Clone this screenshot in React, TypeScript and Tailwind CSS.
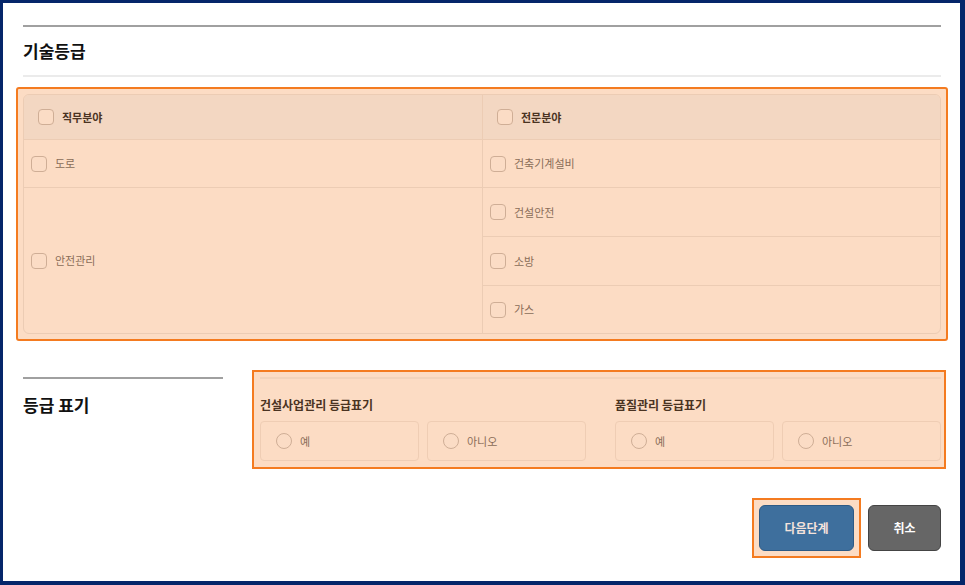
import React from "react";

const font = { fontFamily: '"Noto Sans CJK KR", "Noto Sans", sans-serif' };

function Check() {
  return <span className="inline-block w-4 h-4 shrink-0 rounded-[4px] border border-[#cfae96] bg-[#fbdcc5]" />;
}
function Radio() {
  return <span className="inline-block w-4 h-4 shrink-0 rounded-full border border-[#cfae96] bg-[#fbdcc5]" />;
}

function Cell({ label, className = "" }: { label: string; className?: string }) {
  return (
    <div className={"flex items-center gap-2 pl-[7px] text-[11px] text-[#8a6d58] " + className}>
      <Check />
      <span>{label}</span>
    </div>
  );
}

function RadioBox({ label }: { label: string }) {
  return (
    <div className="flex-1 h-10 flex items-center gap-2 pl-[15px] rounded-[4px] border border-[#efcdb4] text-[11px] text-[#8a6d58]">
      <Radio />
      <span>{label}</span>
    </div>
  );
}

export default function App() {
  return (
    <div
      style={font}
      className="h-[585px] w-[965px] bg-white border-l-[3px] border-t-[3px] border-r-[5px] border-b-[4px] border-[#05266a] overflow-hidden"
    >
      <div className="pl-[20px] pr-[19px] pt-[22px]">
        <div className="h-[2px] bg-[#a0a0a0]" />
        <div className="h-[48px] flex items-center text-[17px] font-bold text-[#111]">기술등급</div>
        <div className="h-[2px] bg-[#ebebeb]" />
        <div className="mt-[10px] -mx-[7px] border-2 border-[#f47b20] rounded-[3px] bg-[#fcdcc4] p-[5px]">
          <div className="rounded-[6px] border border-[#ecccb4] overflow-hidden">
            <div className="grid grid-cols-[459px_1fr] h-[45px] bg-[#f3d7c2] border-b border-[#ecccb4]">
              <div className="flex items-center gap-2 pl-[14px] text-[11px] font-bold text-[#4a3322] border-r border-[#ecccb4]">
                <Check />
                <span>직무분야</span>
              </div>
              <div className="flex items-center gap-2 pl-[14px] text-[11px] font-bold text-[#4a3322]">
                <Check />
                <span>전문분야</span>
              </div>
            </div>
            <div className="grid grid-cols-[459px_1fr]">
              <Cell label="도로" className="h-[48px] border-r border-b border-[#ecccb4]" />
              <Cell label="건축기계설비" className="h-[48px] border-b border-[#ecccb4]" />
              <Cell label="안전관리" className="row-span-3 border-r border-[#ecccb4]" />
              <Cell label="건설안전" className="h-[49px] border-b border-[#ecccb4]" />
              <Cell label="소방" className="h-[49px] border-b border-[#ecccb4]" />
              <Cell label="가스" className="h-[47px]" />
            </div>
          </div>
        </div>

        <div className="mt-[29px] flex items-start">
          <div className="w-[200px] pt-[7px]">
            <div className="h-[2px] bg-[#a0a0a0]" />
            <div className="h-[52px] flex items-center text-[17px] font-bold text-[#111]">등급 표기</div>
          </div>
          <div className="ml-[29px] flex-1 -mr-[5px] border-2 border-[#f47b20] bg-[#fcdcc4] pl-[6px] pr-[3px] pt-[5px] pb-[6px]">
            <div className="h-[2px] bg-[#f2d3bb]" />
            <div className="flex gap-[29px] mt-[16px]">
              <div className="flex-1">
                <div className="h-[20px] flex items-center text-[12px] font-bold text-[#4a3322]">건설사업관리 등급표기</div>
                <div className="mt-[6px] flex gap-2">
                  <RadioBox label="예" />
                  <RadioBox label="아니오" />
                </div>
              </div>
              <div className="flex-1">
                <div className="h-[20px] flex items-center text-[12px] font-bold text-[#4a3322]">품질관리 등급표기</div>
                <div className="mt-[6px] flex gap-2">
                  <RadioBox label="예" />
                  <RadioBox label="아니오" />
                </div>
              </div>
            </div>
          </div>
        </div>

        <div className="mt-[29px] flex justify-end items-center gap-[7px]">
          <div className="border-2 border-[#f47b20] bg-[#fcdcc4] p-[5px]">
            <button className="w-[95px] h-[46px] rounded-[6px] bg-[#3e6f9d] border border-[#2d5a85] text-[12px] font-bold text-[#f5e3dc]">
              다음단계
            </button>
          </div>
          <button className="w-[73px] h-[46px] rounded-[6px] bg-[#666666] border border-[#444] text-[12px] font-bold text-white">
            취소
          </button>
        </div>
      </div>
    </div>
  );
}
